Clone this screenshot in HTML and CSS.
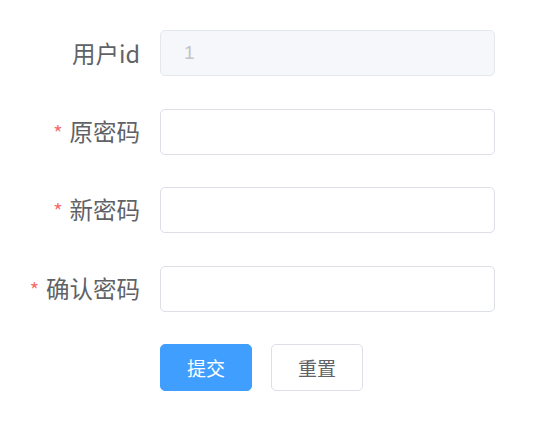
FILE: index.html
```html
<!DOCTYPE html>
<html lang="zh">
<head>
<meta charset="utf-8">
<link rel="stylesheet" href="styles.css">
</head>
<body>
<form class="form">
  <div class="row">
    <label class="label">用户id</label>
    <div class="input is-disabled"><input type="text" value="1" disabled></div>
  </div>
  <div class="row">
    <label class="label required">原密码</label>
    <div class="input"><input type="password"></div>
  </div>
  <div class="row">
    <label class="label required">新密码</label>
    <div class="input"><input type="password"></div>
  </div>
  <div class="row">
    <label class="label required">确认密码</label>
    <div class="input"><input type="password"></div>
  </div>
  <div class="row actions">
    <button type="button" class="btn btn-primary">提交</button>
    <button type="button" class="btn">重置</button>
  </div>
</form>
</body>
</html>
```
FILE: styles.css
```css
html, body {
  margin: 0;
  padding: 0;
  background: #fff;
  font-family: "Noto Sans CJK SC", "Liberation Sans", sans-serif;
}
.form {
  padding-top: 30px;
  width: 495px;
}
.row {
  display: flex;
  align-items: center;
  height: 46px;
  margin-bottom: 32.5px;
}
.label {
  width: 140px;
  flex: none;
  text-align: right;
  font-size: 23.5px;
  color: #606266;
  line-height: 46px;
}
.label.required::before {
  content: "*";
  color: #f56c6c;
  margin-right: 7px;
  font-size: 20px;
}
.input {
  margin-left: 20px;
  flex: 1;
  height: 46px;
}
.input input {
  box-sizing: border-box;
  width: 100%;
  height: 46px;
  border: 1px solid #dcdfe6;
  border-radius: 5px;
  padding: 0 23px;
  font-family: "Liberation Sans", "Noto Sans CJK SC", sans-serif;
  font-size: 19px;
  color: #606266;
  background: #fff;
  outline: none;
}
.input.is-disabled input {
  background: #f5f7fa;
  border-color: #e4e7ed;
  color: #c0c4cc;
}
.actions {
  padding-left: 160px;
  gap: 19px;
  height: 47px;
}
.btn {
  box-sizing: border-box;
  width: 92px;
  height: 47px;
  border: 1px solid #dcdfe6;
  border-radius: 5px;
  background: #fff;
  color: #606266;
  font-family: inherit;
  font-size: 19px;
  padding: 0;
}
.btn-primary {
  background: #409eff;
  border-color: #409eff;
  color: #fff;
}
```
